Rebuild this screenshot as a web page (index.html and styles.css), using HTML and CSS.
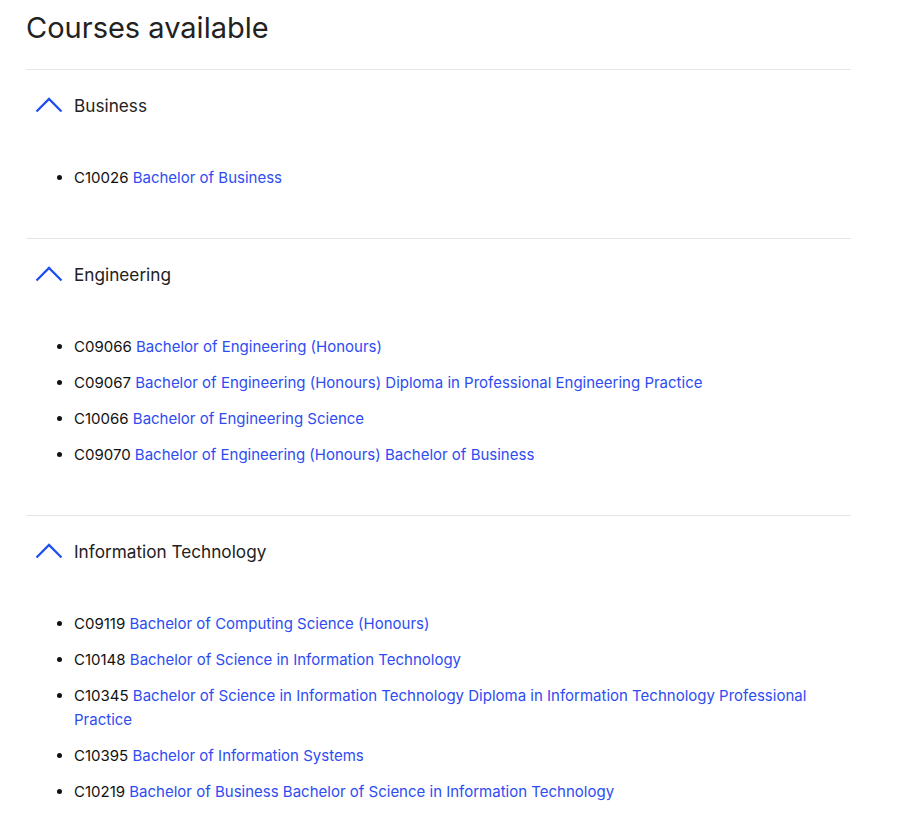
FILE: index.html
```html
<!DOCTYPE html>
<html lang="en">
<head>
<meta charset="utf-8">
<title>Courses available</title>
<link rel="stylesheet" href="styles.css">
</head>
<body>
<main class="page">
  <h1 class="title">Courses available</h1>

  <section class="group">
    <div class="group-head">
      <svg class="chev" width="28" height="16" viewBox="0 0 28 16"><path d="M1.5 14.5 L14 2 L26.5 14.5" fill="none" stroke="#1f4ff0" stroke-width="2.3"/></svg>
      <span class="group-name">Business</span>
    </div>
    <ul class="courses">
      <li>C10026 <a href="#">Bachelor of Business</a></li>
    </ul>
  </section>

  <section class="group">
    <div class="group-head">
      <svg class="chev" width="28" height="16" viewBox="0 0 28 16"><path d="M1.5 14.5 L14 2 L26.5 14.5" fill="none" stroke="#1f4ff0" stroke-width="2.3"/></svg>
      <span class="group-name">Engineering</span>
    </div>
    <ul class="courses">
      <li>C09066 <a href="#">Bachelor of Engineering (Honours)</a></li>
      <li>C09067 <a href="#">Bachelor of Engineering (Honours) Diploma in Professional Engineering Practice</a></li>
      <li>C10066 <a href="#">Bachelor of Engineering Science</a></li>
      <li>C09070 <a href="#">Bachelor of Engineering (Honours) Bachelor of Business</a></li>
    </ul>
  </section>

  <section class="group">
    <div class="group-head">
      <svg class="chev" width="28" height="16" viewBox="0 0 28 16"><path d="M1.5 14.5 L14 2 L26.5 14.5" fill="none" stroke="#1f4ff0" stroke-width="2.3"/></svg>
      <span class="group-name">Information Technology</span>
    </div>
    <ul class="courses">
      <li>C09119 <a href="#">Bachelor of Computing Science (Honours)</a></li>
      <li>C10148 <a href="#">Bachelor of Science in Information Technology</a></li>
      <li>C10345 <a href="#">Bachelor of Science in Information Technology Diploma in Information Technology Professional Practice</a></li>
      <li>C10395 <a href="#">Bachelor of Information Systems</a></li>
      <li>C10219 <a href="#">Bachelor of Business Bachelor of Science in Information Technology</a></li>
    </ul>
  </section>
</main>
</body>
</html>
```

FILE: styles.css
```css
html, body {
  margin: 0;
  padding: 0;
  background: #ffffff;
}
body {
  font-family: Inter, "Liberation Sans", Arial, sans-serif;
  color: #222222;
}
.page {
  width: 825px;
  margin-left: 26px;
  padding-top: 10px;
}
.title {
  margin: 0;
  font-size: 29px;
  font-weight: 400;
  line-height: 36px;
  color: #222222;
  padding-bottom: 23px;
}
.group {
  border-top: 1px solid #e6e6e6;
  padding-bottom: 48px;
}
.group-head {
  display: flex;
  align-items: center;
  height: 24px;
  margin-top: 24px;
  padding-left: 9px;
  gap: 11px;
}
.chev {
  display: block;
  margin-top: -3px;
}
.group-name {
  font-size: 17.2px;
  line-height: 24px;
  color: #222222;
}
.courses {
  margin: 48px 0 0 0;
  padding: 0 0 0 48px;
  list-style: disc;
}
.courses li {
  font-size: 15px;
  line-height: 24px;
  color: #111111;
  margin-bottom: 12px;
}
.courses li:last-child {
  margin-bottom: 0;
}
.courses a {
  color: #2e4cf2;
  text-decoration: none;
}
```
